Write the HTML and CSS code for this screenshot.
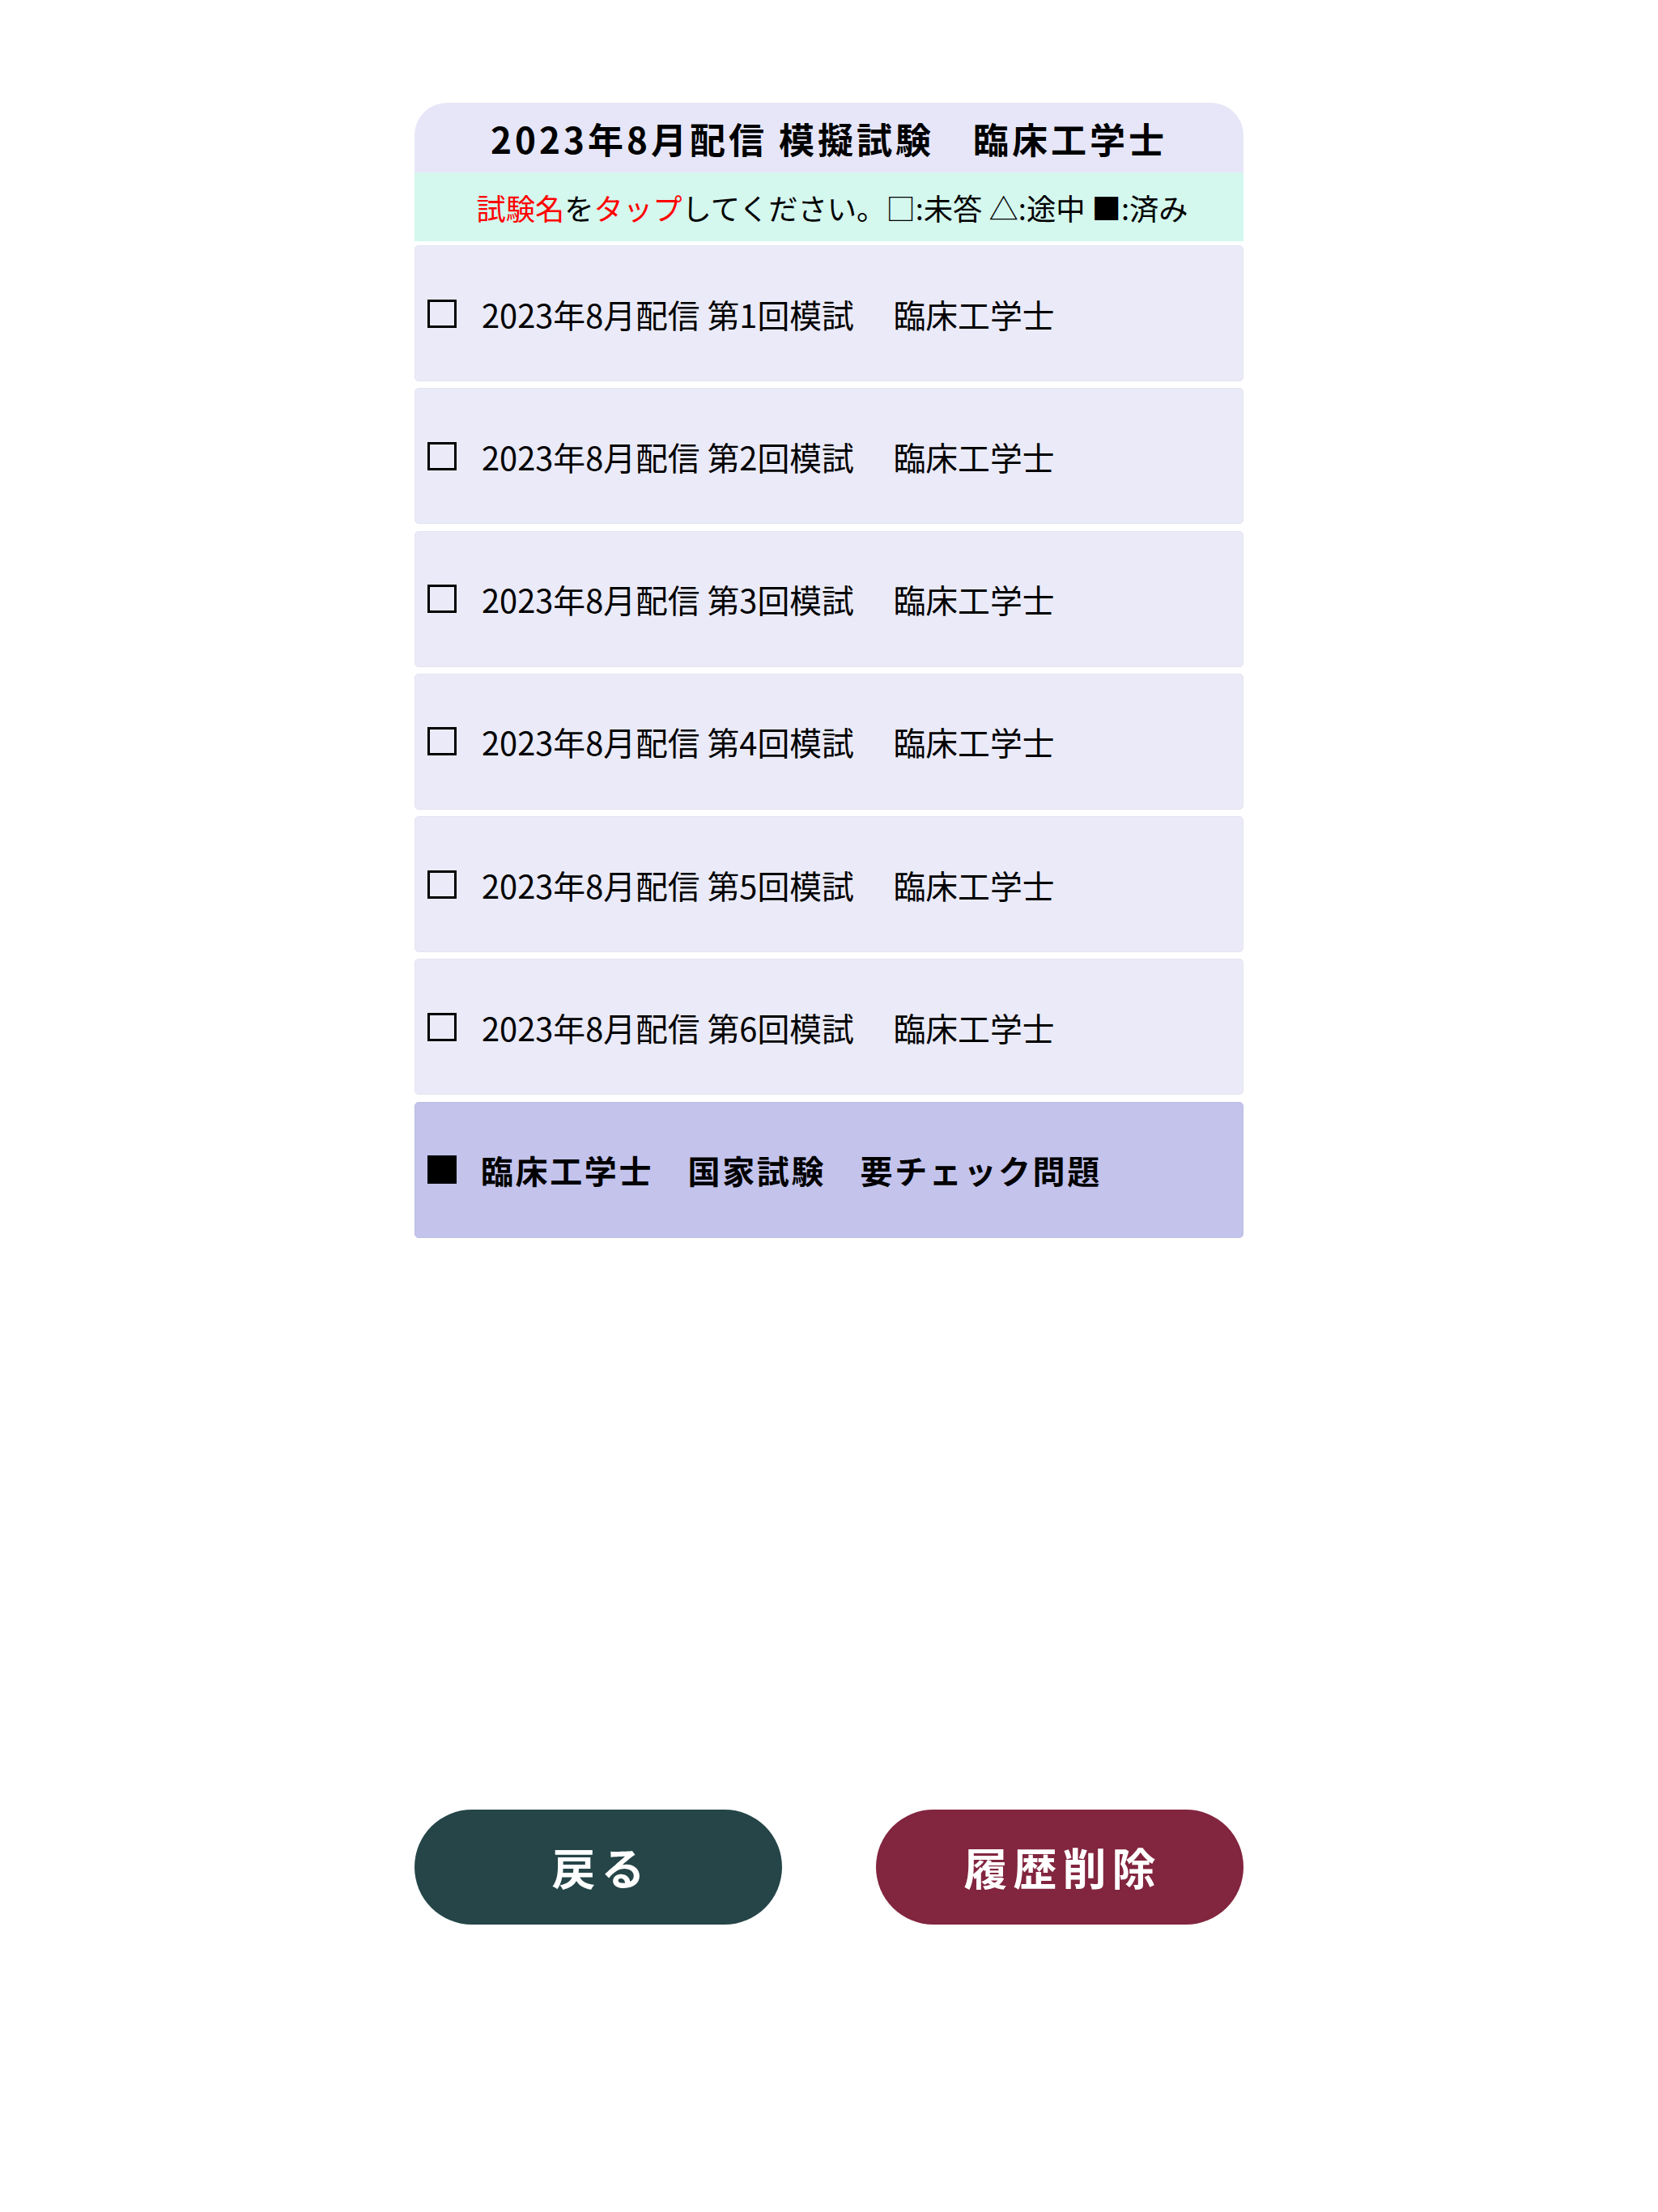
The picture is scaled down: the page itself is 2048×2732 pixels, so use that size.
FILE: index.html
```html
<!DOCTYPE html>
<html lang="ja">
<head>
    <meta charset="UTF-8">
    <meta name="viewport" content="width=device-width, initial-scale=1.0">
    <title>模擬試験 | 臨床工学士</title>
    <link rel="stylesheet" href="styles.css">
</head>
<body>
    <div class="main-container">
        <div class="exam-header">2023年8月配信 模擬試験　臨床工学士</div>
        <div class="guide">
            <span class="red">試験名</span>を<span class="red">タップ</span>してください。□:未答 △:途中 ■:済み
        </div>

        <ul class="exam-list">
            <li class="exam-item"><span class="mark"></span>2023年8月配信 第1回模試 　臨床工学士</li>
            <li class="exam-item"><span class="mark"></span>2023年8月配信 第2回模試 　臨床工学士</li>
            <li class="exam-item"><span class="mark"></span>2023年8月配信 第3回模試 　臨床工学士</li>
            <li class="exam-item"><span class="mark"></span>2023年8月配信 第4回模試 　臨床工学士</li>
            <li class="exam-item"><span class="mark"></span>2023年8月配信 第5回模試 　臨床工学士</li>
            <li class="exam-item"><span class="mark"></span>2023年8月配信 第6回模試 　臨床工学士</li>
            <li class="exam-item check"><span class="mark done"></span>臨床工学士　国家試験　要チェック問題</li>
        </ul>

        <div class="buttons">
            <button class="btn back">戻る</button>
            <button class="btn delete">履歴削除</button>
        </div>
    </div>
</body>
</html>
```

FILE: styles.css
```css
* {
    margin: 0;
    padding: 0;
    box-sizing: border-box;
    font-family: "Noto Sans CJK JP", "Noto Sans", sans-serif;
}

body {
    background-color: #ffffff;
    color: #000000;
}

/* 全体 */
.main-container {
    width: 1024px;
    margin: 127px auto 0;
}

/* タイトル */
.exam-header {
    height: 86px;
    background-color: #e6e6f8;
    border-radius: 40px 40px 0 0;
    display: flex;
    align-items: center;
    justify-content: center;
    padding-top: 2px;
    font-size: 44px;
    font-weight: bold;
    letter-spacing: 4px;
}

.guide {
    height: 85px;
    background-color: #d4f7ee;
    display: flex;
    align-items: center;
    justify-content: center;
    padding-left: 8px;
    font-size: 36.3px;
}

.red {
    color: #ff0000;
}

/* 試験リスト */
.exam-list {
    list-style: none;
    margin-top: 5px;
    display: flex;
    flex-direction: column;
    gap: 8.3px;
}

.exam-item {
    height: 168px;
    background-color: #eaeaf8;
    border: 1px solid #e4e4f2;
    border-radius: 5px;
    display: flex;
    align-items: center;
    padding-left: 15px;
    font-size: 39.8px;
}

.exam-item.check {
    background-color: #c3c3ec;
    border-color: #bcbce2;
    font-size: 40px;
    font-weight: bold;
    letter-spacing: 2.6px;
}

.mark {
    width: 36px;
    height: 35px;
    border: 3px solid #000000;
    margin-right: 31px;
    flex-shrink: 0;
}

.mark.done {
    background-color: #000000;
    margin-right: 30px;
}

/* ボタン */
.buttons {
    margin-top: 706px;
    display: flex;
    justify-content: space-between;
}

.btn {
    width: 454px;
    height: 142px;
    border: none;
    border-radius: 71px;
    padding-left: 7px;
    color: #ffffff;
    font-size: 54px;
    font-weight: bold;
    letter-spacing: 7px;
    cursor: pointer;
}

.back {
    background-color: #254548;
}

.delete {
    background-color: #82253f;
}
```
